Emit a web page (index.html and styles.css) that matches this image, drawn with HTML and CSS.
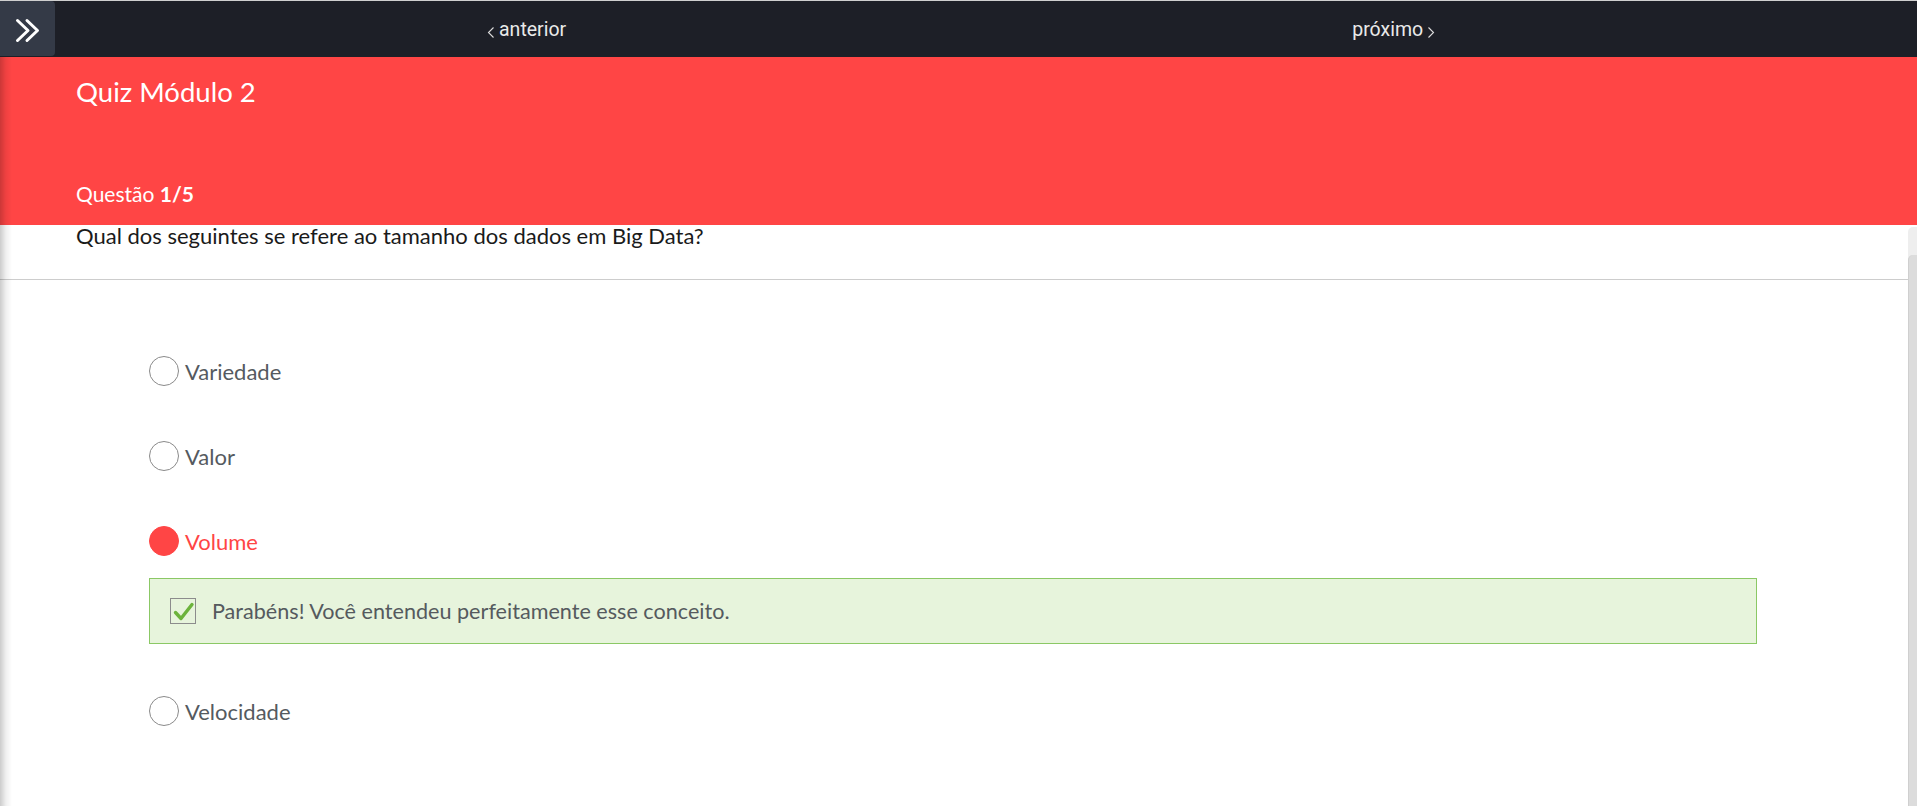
FILE: index.html
```html
<!DOCTYPE html>
<html lang="pt">
<head>
<meta charset="utf-8">
<title>Quiz Módulo 2</title>
<link rel="stylesheet" href="styles.css">
</head>
<body>
<div class="app">
  <header class="topbar">
    <button class="toggle" aria-label="menu">
      <svg width="55" height="55" viewBox="0 0 55 55">
        <path d="M17.5 19.5 L28 29.5 L17.5 39.5" fill="none" stroke="#fff" stroke-width="3" stroke-linecap="round" stroke-linejoin="round"/>
        <path d="M27 19.5 L37.5 29.5 L27 39.5" fill="none" stroke="#fff" stroke-width="3" stroke-linecap="round" stroke-linejoin="round"/>
      </svg>
    </button>
    <nav class="pager">
      <a class="pager-link prev" href="#">
        <svg class="chev" width="8" height="12" viewBox="0 0 8 12"><path d="M6.5 1.5 L1.5 6.5 L6.5 11.5" fill="none" stroke="#ddd" stroke-width="1.1"/></svg>
        anterior
      </a>
      <a class="pager-link next" href="#">
        próximo
        <svg class="chev" width="8" height="12" viewBox="0 0 8 12"><path d="M1.5 1.5 L6.5 6.5 L1.5 11.5" fill="none" stroke="#ddd" stroke-width="1.1"/></svg>
      </a>
    </nav>
  </header>

  <div class="stage">
    <section class="banner">
      <h1 class="quiz-title">Quiz Módulo 2</h1>
      <div class="counter">Questão <b>1/5</b></div>
    </section>

    <div class="body">
      <main class="content">
        <p class="question">Qual dos seguintes se refere ao tamanho dos dados em Big Data?</p>
        <ul class="options">
          <li class="option"><span class="radio"></span><span class="label">Variedade</span></li>
          <li class="option"><span class="radio"></span><span class="label">Valor</span></li>
          <li class="option selected"><span class="radio"></span><span class="label">Volume</span></li>
          <li class="feedback">
            <span class="checkbox">
              <svg width="24" height="24" viewBox="0 0 24 24"><path d="M4.5 13.5 L10 19.5 L21 5.5" fill="none" stroke="#6cb33c" stroke-width="3.4" stroke-linecap="round" stroke-linejoin="round"/></svg>
            </span>
            <span class="feedback-text">Parabéns! Você entendeu perfeitamente esse conceito.</span>
          </li>
          <li class="option"><span class="radio"></span><span class="label">Velocidade</span></li>
        </ul>
      </main>
      <div class="scrollbar"><div class="thumb"></div></div>
    </div>
  </div>
</div>
</body>
</html>
```

FILE: styles.css
```css
* { box-sizing: border-box; }

html, body {
  margin: 0;
  padding: 0;
  height: 100%;
  overflow: hidden;
  background: #fff;
  font-family: Lato, "Open Sans", "Liberation Sans", sans-serif;
}

.app {
  display: flex;
  flex-direction: column;
  height: 806px;
}

.topbar {
  display: flex;
  height: 57px;
  flex: 0 0 57px;
  background: #1d1f27;
  border-top: 1px solid #cfcfcf;
}

.toggle {
  width: 55px;
  height: 55px;
  padding: 0;
  margin: 0;
  border: 0;
  background: #343a47;
  border-radius: 0 4px 4px 0;
  display: block;
}
.toggle svg { display: block; }

.pager {
  display: flex;
  align-items: center;
  padding-left: 432px;
  gap: 786px;
}

.pager-link {
  display: flex;
  align-items: center;
  gap: 4px;
  color: #e9e9e9;
  text-decoration: none;
  font-family: Roboto, "Open Sans", sans-serif;
  font-size: 19.5px;
  padding-top: 1px;
}
.pager-link .chev { margin-top: 5px; }

.stage {
  position: relative;
  flex: 1;
  display: flex;
  flex-direction: column;
  min-height: 0;
}
.stage::before {
  content: "";
  position: absolute;
  left: 0;
  top: 0;
  bottom: 0;
  width: 12px;
  background: linear-gradient(to right, rgba(0,0,0,0.2), rgba(0,0,0,0.06) 50%, rgba(0,0,0,0));
  pointer-events: none;
  z-index: 2;
}

.banner {
  background: #ff4545;
  color: #fff;
  height: 168px;
  flex: 0 0 168px;
  padding: 18px 0 0 76px;
}

.quiz-title {
  margin: 0;
  font-weight: 400;
  font-size: 27.5px;
  line-height: 33px;
}

.counter {
  margin-top: 74px;
  font-size: 21px;
  line-height: 24px;
}
.counter b { font-weight: 700; }

.body {
  flex: 1;
  display: flex;
  min-height: 0;
}

.content {
  flex: 1;
  min-width: 0;
}

.question {
  margin: 0;
  padding: 0 0 33px 76px;
  font-size: 22px;
  line-height: 21px;
  color: #1a1a1a;
  border-bottom: 1px solid #cdcdcd;
}

.options {
  list-style: none;
  margin: 0;
  padding: 76px 151px 0 149px;
}

.option {
  display: flex;
  align-items: center;
  height: 30px;
  gap: 6px;
  margin-bottom: 55px;
  font-size: 22px;
  color: #555a60;
}

.radio {
  width: 30px;
  height: 30px;
  flex: 0 0 30px;
  border-radius: 50%;
  border: 1.5px solid #8a8a8a;
}

.option.selected { color: #ff4545; margin-bottom: 22px; }
.option.selected .radio {
  background: #ff4545;
  border-color: #ff4545;
}

.feedback {
  display: flex;
  align-items: center;
  gap: 16px;
  height: 66px;
  padding: 0 20px;
  border: 1px solid #8bc865;
  background: #e7f4dc;
  margin-bottom: 52px;
}

.checkbox {
  width: 26px;
  height: 26px;
  flex: 0 0 26px;
  border: 1.5px solid #8c8c8c;
  display: flex;
  align-items: center;
  justify-content: center;
}
.checkbox svg { display: block; }

.feedback-text {
  font-size: 21.6px;
  color: #555a5e;
}

.scrollbar {
  width: 9px;
  flex: 0 0 9px;
  margin-top: 2px;
  background: #eeeeee;
  border-radius: 5px 0 0 0;
  padding-top: 28px;
  display: flex;
  flex-direction: column;
}
.thumb {
  flex: 1;
  background: #dcdcdc;
  border-left: 1px solid #cfcfcf;
  border-radius: 5px 0 0 0;
}
```
